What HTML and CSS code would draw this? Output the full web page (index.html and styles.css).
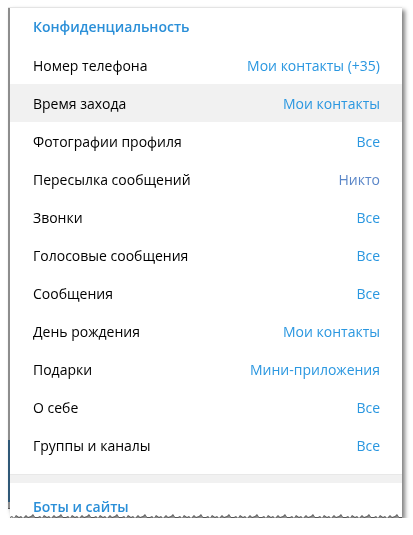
FILE: index.html
```html
<!DOCTYPE html>
<html lang="ru">
<head>
    <meta charset="UTF-8">
    <meta name="viewport" content="width=device-width, initial-scale=1.0">
    <title>Конфиденциальность</title>
    <link rel="stylesheet" href="styles.css">
</head>
<body>
    <div class="frame">
        <div class="panel">
            <div class="section-title">Конфиденциальность</div>
            <div class="setting-row">
                <span class="label">Номер телефона</span>
                <span class="value">Мои контакты (+35)</span>
            </div>
            <div class="setting-row active">
                <span class="label">Время захода</span>
                <span class="value">Мои контакты</span>
            </div>
            <div class="setting-row">
                <span class="label">Фотографии профиля</span>
                <span class="value">Все</span>
            </div>
            <div class="setting-row">
                <span class="label">Пересылка сообщений</span>
                <span class="value muted">Никто</span>
            </div>
            <div class="setting-row">
                <span class="label">Звонки</span>
                <span class="value">Все</span>
            </div>
            <div class="setting-row">
                <span class="label">Голосовые сообщения</span>
                <span class="value">Все</span>
            </div>
            <div class="setting-row">
                <span class="label">Сообщения</span>
                <span class="value">Все</span>
            </div>
            <div class="setting-row">
                <span class="label">День рождения</span>
                <span class="value">Мои контакты</span>
            </div>
            <div class="setting-row">
                <span class="label">Подарки</span>
                <span class="value">Мини-приложения</span>
            </div>
            <div class="setting-row">
                <span class="label">О себе</span>
                <span class="value">Все</span>
            </div>
            <div class="setting-row">
                <span class="label">Группы и каналы</span>
                <span class="value">Все</span>
            </div>

            <div class="divider"></div>
            <div class="section-title next">Боты и сайты</div>
        </div>
    </div>
</body>
</html>
```

FILE: styles.css
```css
body {
    margin: 0;
    padding: 8px 0 0 8px;
    background-color: #fff;
    font-family: "Open Sans", "Noto Sans", sans-serif;
    font-size: 14px;
    color: #000;
}

/* holds the shadow and the edge of the window behind */
.frame {
    width: 392px;
    padding-left: 2px;
    background: linear-gradient(#8d8d8d 0, #8d8d8d 432px, #2f5877 432px, #2f5877 494px, #8d8d8d 494px) left top / 2px 500px no-repeat;
    filter: drop-shadow(0 -1px 0 #e4e4e4) drop-shadow(0 1px 0 #555) drop-shadow(3px 3px 2px rgba(0, 0, 0, 0.5));
}

.panel {
    height: 510px;
    overflow: hidden;
    background-color: #fff;
    /* torn bottom edge */
    clip-path: polygon(392px 0, 0 0, 0 509px,
        2px 508px, 4px 510px, 6px 507px, 9px 509px, 11px 508px, 13px 510px, 16px 507px, 18px 509px, 21px 508px, 23px 506px, 25px 509px,
        28px 509px, 30px 508px, 32px 510px, 34px 507px, 37px 509px, 39px 508px, 41px 510px, 44px 507px, 46px 509px, 49px 508px, 51px 506px, 53px 509px,
        56px 509px, 58px 508px, 60px 510px, 62px 507px, 65px 509px, 67px 508px, 69px 510px, 72px 507px, 74px 509px, 77px 508px, 79px 506px, 81px 509px,
        84px 509px, 86px 508px, 88px 510px, 90px 507px, 93px 509px, 95px 508px, 97px 510px, 100px 507px, 102px 509px, 105px 508px, 107px 506px, 109px 509px,
        112px 509px, 114px 508px, 116px 510px, 118px 507px, 121px 509px, 123px 508px, 125px 510px, 128px 507px, 130px 509px, 133px 508px, 135px 506px, 137px 509px,
        140px 509px, 142px 508px, 144px 510px, 146px 507px, 149px 509px, 151px 508px, 153px 510px, 156px 507px, 158px 509px, 161px 508px, 163px 506px, 165px 509px,
        168px 509px, 170px 508px, 172px 510px, 174px 507px, 177px 509px, 179px 508px, 181px 510px, 184px 507px, 186px 509px, 189px 508px, 191px 506px, 193px 509px,
        196px 509px, 198px 508px, 200px 510px, 202px 507px, 205px 509px, 207px 508px, 209px 510px, 212px 507px, 214px 509px, 217px 508px, 219px 506px, 221px 509px,
        224px 509px, 226px 508px, 228px 510px, 230px 507px, 233px 509px, 235px 508px, 237px 510px, 240px 507px, 242px 509px, 245px 508px, 247px 506px, 249px 509px,
        252px 509px, 254px 508px, 256px 510px, 258px 507px, 261px 509px, 263px 508px, 265px 510px, 268px 507px, 270px 509px, 273px 508px, 275px 506px, 277px 509px,
        280px 509px, 282px 508px, 284px 510px, 286px 507px, 289px 509px, 291px 508px, 293px 510px, 296px 507px, 298px 509px, 301px 508px, 303px 506px, 305px 509px,
        308px 509px, 310px 508px, 312px 510px, 314px 507px, 317px 509px, 319px 508px, 321px 510px, 324px 507px, 326px 509px, 329px 508px, 331px 506px, 333px 509px,
        336px 509px, 338px 508px, 340px 510px, 342px 507px, 345px 509px, 347px 508px, 349px 510px, 352px 507px, 354px 509px, 357px 508px, 359px 506px, 361px 509px,
        364px 509px, 366px 508px, 368px 510px, 370px 507px, 373px 509px, 375px 508px, 377px 510px, 380px 507px, 382px 509px, 385px 508px, 387px 506px, 389px 509px,
        392px 509px);
}

.section-title {
    height: 38px;
    line-height: 38px;
    padding: 0 22px 0 23px;
    font-weight: 600;
    color: #2a8fd8;
}

.section-title.next {
    margin-top: 5px;
}

.setting-row {
    display: flex;
    justify-content: space-between;
    align-items: center;
    height: 38px;
    padding: 0 22px 0 23px;
}

.setting-row.active {
    background-color: #f1f1f1;
}

.value {
    color: #2a97e0;
}

.value.muted {
    color: #5a86c8;
}

.divider {
    margin-top: 10px;
    height: 8px;
    background-color: #f1f1f1;
    border-top: 1px solid #e8e8e8;
}
```
